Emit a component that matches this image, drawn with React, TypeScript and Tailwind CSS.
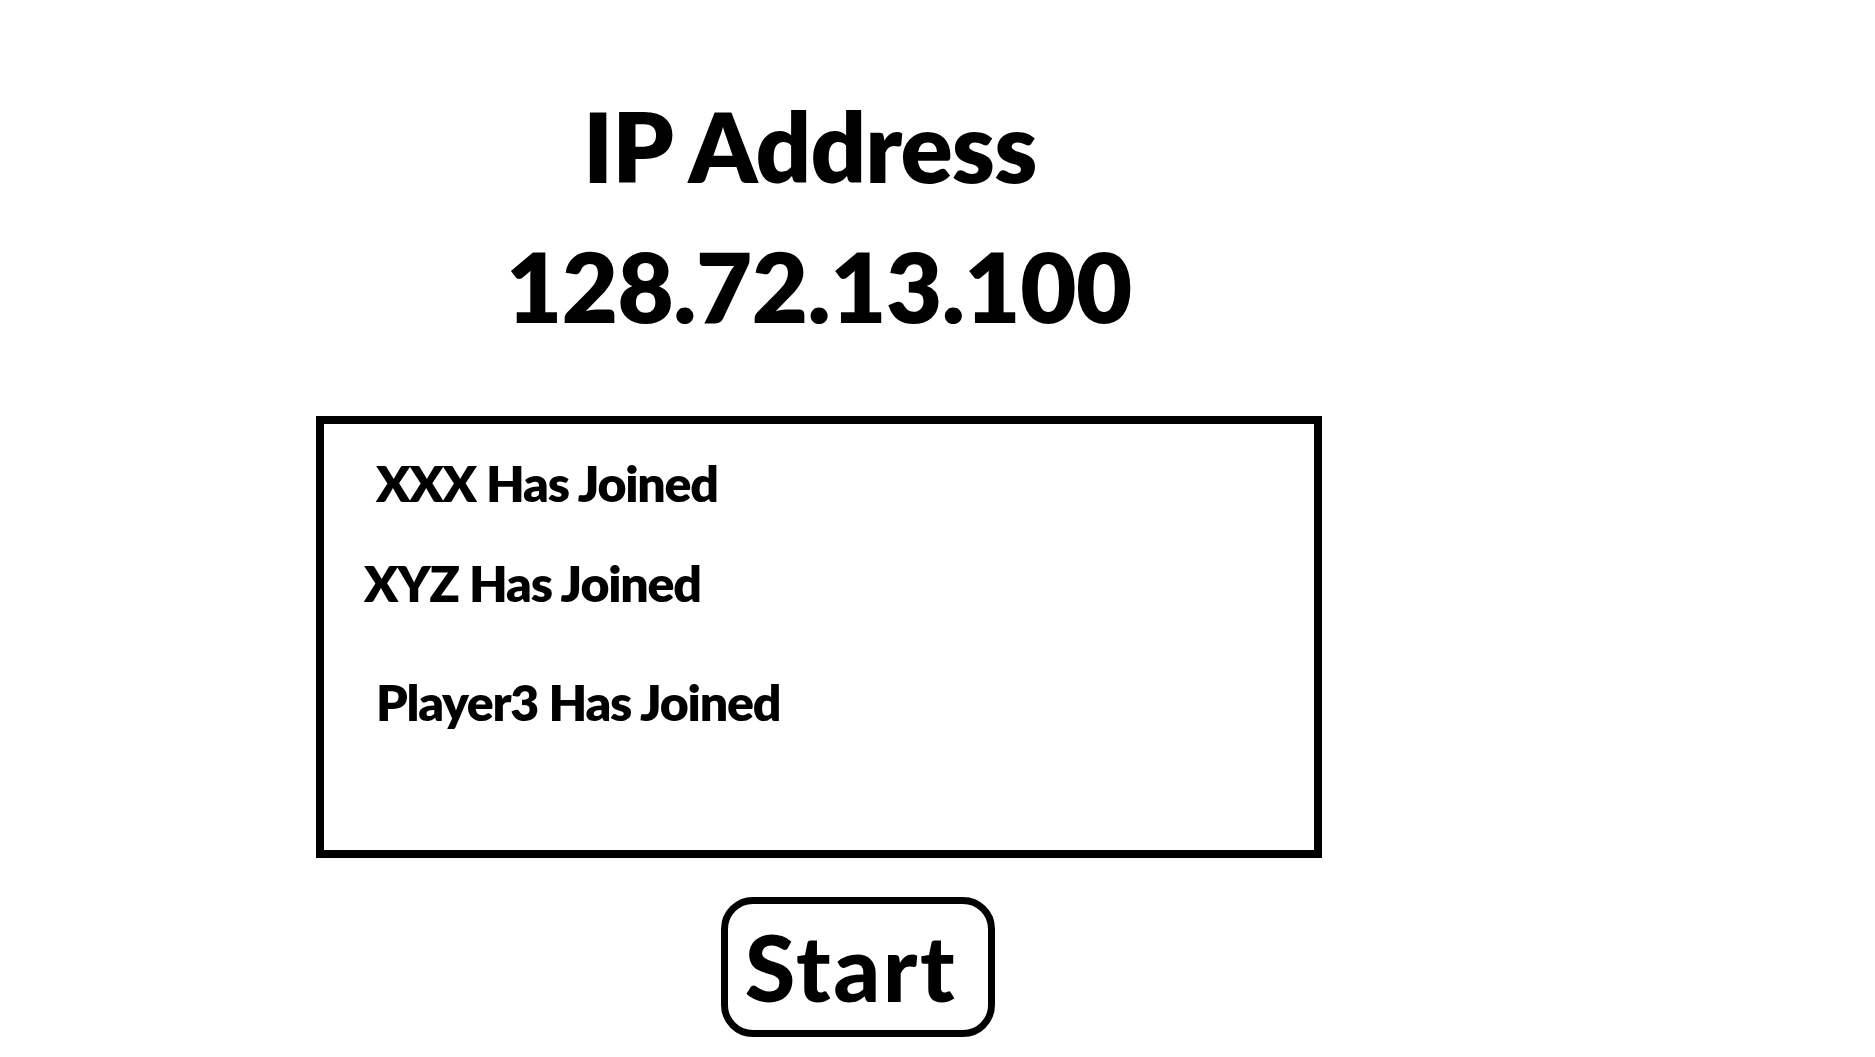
import React from 'react';

const players = [
  { name: 'XXX', offset: 'ml-[52px] mt-[34px]' },
  { name: 'XYZ', offset: 'ml-[40px] mt-[50px]' },
  { name: 'Player3', offset: 'ml-[52px] mt-[69px]' },
];

const App: React.FC = () => {
  return (
    <div
      className="w-[1875px] h-[1057px] bg-white text-black overflow-hidden flex flex-col"
      style={{ fontFamily: 'Lato, "Noto Sans", sans-serif' }}
    >
      <h1 className="mt-[97px] ml-[583px] text-[97px] font-extrabold leading-none tracking-[-0.9px]">IP Address</h1>
      <h2 className="mt-[43px] ml-[506px] text-[97px] font-extrabold leading-none tracking-[-0.5px]">128.72.13.100</h2>

      <div className="mt-[82px] ml-[316px] w-[1006px] h-[442px] border-[8px] border-black flex flex-col">
        {players.map(p => (
          <p key={p.name} className={`${p.offset} text-[50px] font-extrabold leading-none tracking-[-1.25px]`}>
            {p.name} Has Joined
          </p>
        ))}
      </div>

      <button className="mt-[39px] ml-[721px] w-[274px] h-[140px] border-[7px] border-black rounded-[32px] flex items-start justify-center pt-[17px] pr-[14px] text-[92px] font-black leading-none tracking-[2.5px]">
        Start
      </button>
    </div>
  );
};

export default App;
